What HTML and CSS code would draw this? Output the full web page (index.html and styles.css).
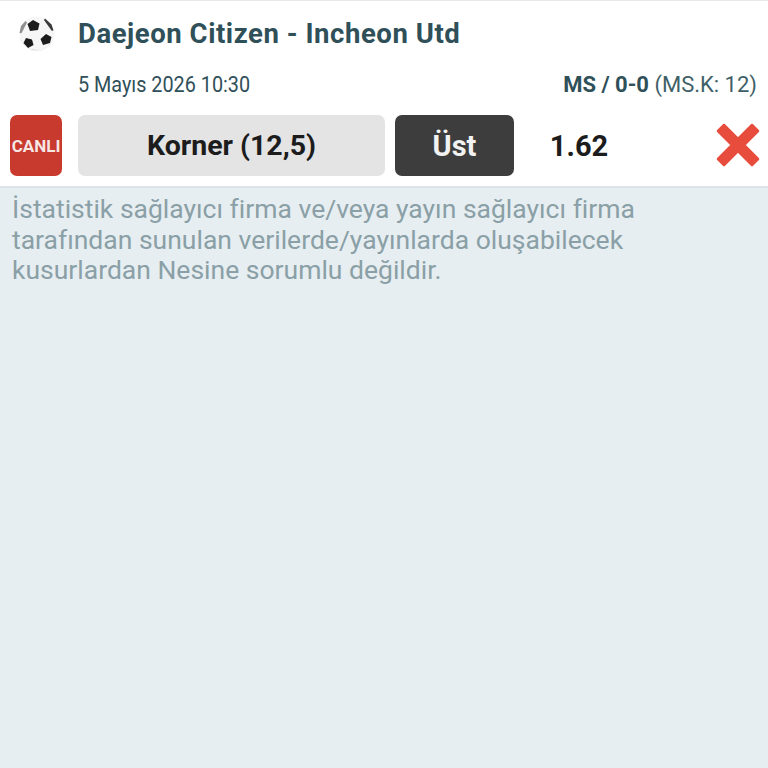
FILE: index.html
```html
<!DOCTYPE html>
<html lang="tr">
<head>
<meta charset="utf-8">
<title>Kupon</title>
<link rel="stylesheet" href="styles.css">
</head>
<body>
<section class="card">
  <div class="title-row">
    <svg class="ball" viewBox="0 0 36 36" aria-hidden="true">
      <circle cx="18" cy="18" r="17.5" fill="#f6f6f6"/>
      <path d="M1 22a17.500 17.500 0 0 0 33 1a17 17 0 0 1-16 11a17 17 0 0 1-17-12z" fill="#bdbdbd"/>
      <polygon points="14,4 20.500,7.500 19,14 11,15 8.500,8" fill="#1c1c1c"/>
      <polygon points="7,22 13,23.500 14.500,29 9,32 4.500,27" fill="#1c1c1c"/>
      <polygon points="27,18 32.500,21 31,27 24,29 21.500,23" fill="#1c1c1c"/>
      <path d="M26 2.500l6.500 6 2 6-1.800.3L25 4z" fill="#3a3a3a"/>
      <path d="M6.500 5L2 10l-1.500 7 2 .3L8 6.500z" fill="#8f8f8f"/>
    </svg>
    <h1 class="match">Daejeon Citizen - Incheon Utd</h1>
  </div>
  <div class="meta-row">
    <span class="date">5 Mayıs 2026 10:30</span>
    <span class="market"><b>MS / 0-0</b> (MS.K: 12)</span>
  </div>
  <div class="bet-row">
    <span class="live">CANLI</span>
    <span class="pick">Korner (12,5)</span>
    <span class="side">Üst</span>
    <span class="odds">1.62</span>
    <svg class="cross" viewBox="0 0 44 44" aria-hidden="true">
      <polygon points="8,2 22,16 36,2 42,8 28,22 42,36 36,42 22,28 8,42 2,36 16,22 2,8" fill="#e74c3c" stroke="#e74c3c" stroke-width="2.500" stroke-linejoin="round"/>
    </svg>
  </div>
</section>
<p class="notice">İstatistik sağlayıcı firma ve/veya yayın sağlayıcı firma tarafından sunulan verilerde/yayınlarda oluşabilecek kusurlardan Nesine sorumlu değildir.</p>
</body>
</html>
```

FILE: styles.css
```css
* { box-sizing: border-box; }
html, body { height: 100%; }
body {
  margin: 0;
  background: #e6eef1;
  font-family: Roboto, "Liberation Sans", sans-serif;
}
.card {
  height: 188px;
  background: #fff;
  border-bottom: 2px solid #dbe5e7;
  border-top: 1px solid #e6eaeb;
}
.title-row {
  display: flex;
  align-items: center;
  height: 65px;
  padding-left: 19px;
}
.ball { width: 36px; height: 36px; margin-top: 1px; }
.match {
  margin: -1px 0 0 23px;
  font-size: 27.500px;
  font-weight: 700;
  color: #2f5059;
  letter-spacing: 0.55px;
}
.meta-row {
  display: flex;
  justify-content: space-between;
  align-items: center;
  height: 36px;
  padding: 0 11px 0 78px;
  font-size: 22px;
  color: #2f5059;
}
.date { display: inline-block; transform: scaleX(0.9); transform-origin: left center; }
.market { color: #3f5f68; }
.market b { font-weight: 700; color: #2f5059; }
.bet-row {
  display: flex;
  align-items: center;
  margin-top: 13px;
  padding-left: 10px;
  height: 61px;
}
.live {
  width: 52px;
  height: 61px;
  display: flex;
  align-items: center;
  justify-content: center;
  border-radius: 7px;
  background: #c8392e;
  color: #f6e6e4;
  font-size: 17px;
  font-weight: 700;
}
.pick {
  width: 307px;
  height: 61px;
  margin-left: 16px;
  display: flex;
  align-items: center;
  justify-content: center;
  border-radius: 7px;
  background: #e4e4e4;
  color: #1c1c1c;
  font-size: 28.500px;
  font-weight: 700;
}
.side {
  width: 119px;
  height: 61px;
  margin-left: 10px;
  display: flex;
  align-items: center;
  justify-content: center;
  border-radius: 7px;
  background: #3d3d3d;
  color: #f2f2f2;
  font-size: 29px;
  font-weight: 700;
}
.odds {
  width: 130px;
  text-align: center;
  color: #1c1c1c;
  font-size: 29px;
  font-weight: 700;
}
.cross { width: 44px; height: 44px; margin: -1px 0 0 72px; }
.notice {
  margin: 6px 0 0;
  padding: 0 12px;
  width: 660px;
  font-size: 26.500px;
  line-height: 30.500px;
  color: #8a9fa6;
}
```
